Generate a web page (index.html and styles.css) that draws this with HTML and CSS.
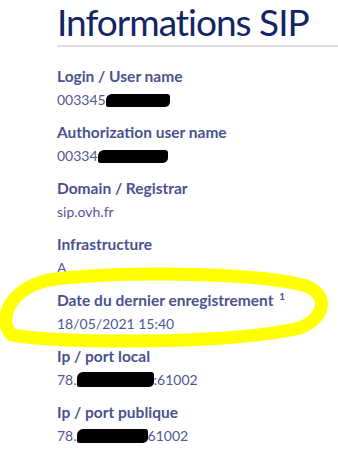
FILE: index.html
```html
<!DOCTYPE html>
<html lang="fr">
<head>
    <meta charset="UTF-8">
    <title>Informations SIP</title>
    <link rel="stylesheet" href="styles.css">
</head>
<body>
    <div class="panel">
        <h1>Informations SIP</h1>

        <dl class="info-list">
            <dt>Login / User name</dt>
            <dd>003345<span class="redact redact-login"></span></dd>

            <dt>Authorization user name</dt>
            <dd>00334<span class="redact redact-auth"></span></dd>

            <dt>Domain / Registrar</dt>
            <dd>sip.ovh.fr</dd>

            <dt>Infrastructure</dt>
            <dd>A</dd>

            <dt>Date du dernier enregistrement <sup>1</sup></dt>
            <dd>18/05/2021 15:40</dd>

            <dt>Ip / port local</dt>
            <dd>78.<span class="redact redact-local"></span>:61002</dd>

            <dt>Ip / port publique</dt>
            <dd>78.<span class="redact redact-public"></span>61002</dd>
        </dl>
    </div>

    <!-- hand drawn highlight around the registration date -->
    <svg class="highlight" width="338" height="453" viewBox="0 0 338 453">
        <path d="M48 280 C 120 271, 250 272, 303 285 C 330 293, 326 318, 300 328 C 230 344, 70 344, 12 335 C -2 322, 6 291, 48 280 Z"
              fill="none" stroke="#ffff00" stroke-width="13"/>
    </svg>
</body>
</html>
```

FILE: styles.css
```css
body {
    margin: 0;
    background-color: #fff;
    font-family: 'Lato', sans-serif;
    position: relative;
    overflow: hidden;
}

.panel {
    padding-left: 57px;
}

h1 {
    margin: 0;
    font-size: 37px;
    line-height: 44px;
    font-weight: 400;
    letter-spacing: -1px;
    white-space: nowrap;
    color: #132565;
    border-bottom: 2px solid #dedede;
    padding-bottom: 1px;
}

.info-list {
    margin: 17px 0 0;
}

.info-list dt {
    font-size: 15.5px;
    font-weight: 700;
    line-height: 24px;
    color: #4a5290;
}

.info-list dt sup {
    font-size: 10px;
    line-height: 0;
    margin-left: 2px;
}

.info-list dd {
    margin: 0 0 9px;
    font-size: 14px;
    line-height: 23px;
    color: #4f5896;
}

.redact {
    display: inline-block;
    height: 13px;
    background-color: #000;
    border-radius: 6px 3px 5px 2px;
    vertical-align: -2px;
}

.redact-login { width: 64px; }
.redact-auth { width: 70px; }
.redact-local { width: 77px; height: 15px; }
.redact-public { width: 71px; height: 14px; }

.highlight {
    position: absolute;
    top: 0;
    left: 0;
    pointer-events: none;
}
```
